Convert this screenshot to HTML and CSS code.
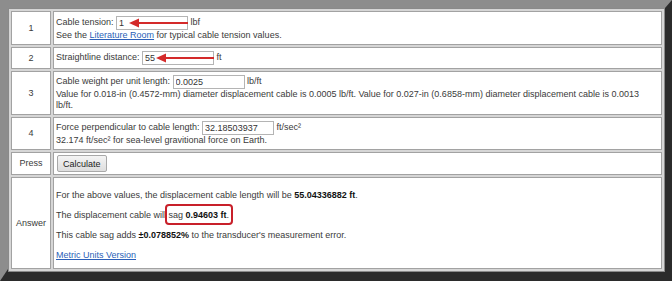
FILE: index.html
```html
<!DOCTYPE html>
<html lang="en">
<head>
  <meta charset="UTF-8">
  <title>Cable Sag Calculator</title>
  <link rel="stylesheet" href="styles.css">
</head>
<body>
  <div class="frame">
    <table class="calc">
      <tr>
        <td class="num">1</td>
        <td class="body">
          Cable tension: <span class="field"><input type="text" value="1"><svg class="arrow arrow-1" width="59" height="10" viewBox="0 0 59 10"><polygon points="0,5 10,0.5 10,9.5" fill="#d42a2a"/><line x1="9" y1="5" x2="59" y2="5" stroke="#d42a2a" stroke-width="2"/></svg></span> lbf<br>
          See the <a href="#">Literature Room</a> for typical cable tension values.
        </td>
      </tr>
      <tr>
        <td class="num">2</td>
        <td class="body">
          Straightline distance: <span class="field"><input type="text" value="55"><svg class="arrow arrow-2" width="58" height="10" viewBox="0 0 58 10"><polygon points="0,5 10,0.5 10,9.5" fill="#d42a2a"/><line x1="9" y1="5" x2="58" y2="5" stroke="#d42a2a" stroke-width="2"/></svg></span> ft
        </td>
      </tr>
      <tr>
        <td class="num">3</td>
        <td class="body">
          Cable weight per unit length: <span class="field"><input type="text" value="0.0025"></span> lb/ft<br>
          Value for 0.018-in (0.4572-mm) diameter displacement cable is 0.0005 lb/ft. Value for 0.027-in (0.6858-mm) diameter displacement cable is 0.0013 lb/ft.
        </td>
      </tr>
      <tr>
        <td class="num">4</td>
        <td class="body">
          Force perpendicular to cable length: <span class="field"><input type="text" value="32.18503937"></span> ft/sec²<br>
          32.174 ft/sec² for sea-level gravitional force on Earth.
        </td>
      </tr>
      <tr>
        <td class="num">Press</td>
        <td class="body"><button type="button">Calculate</button></td>
      </tr>
      <tr>
        <td class="num">Answer</td>
        <td class="body answer">
          <p>For the above values, the displacement cable length will be <b>55.04336882 ft</b>.</p>
          <p>The displacement cable will <span class="marked">sag <b>0.94603 ft</b>.</span></p>
          <p>This cable sag adds <b>±0.078852%</b> to the transducer's measurement error.</p>
          <p class="metric"><a href="#">Metric Units Version</a></p>
        </td>
      </tr>
    </table>
  </div>
</body>
</html>
```

FILE: styles.css
```css
html, body {
  margin: 0;
  padding: 0;
}
body {
  font-family: "Liberation Sans", Arial, sans-serif;
  font-size: 9px;
  color: #3a3a3a;
  background: #fff;
}
.frame {
  width: 657px;
  height: 261px;
  border-style: solid;
  border-width: 8px 7px 12px 8px;
  border-color: #8d8d8d #2b2b2b #2b2b2b #8d8d8d;
}
.calc {
  width: 657px;
  height: 261px;
  border: 1px solid #8a8a8a;
  border-spacing: 2px;
  background: #d6d6d6;
}
.calc td {
  background: #fff;
  border: 1px solid #a2a2a2;
  line-height: 11px;
}
.num {
  width: 34px;
  padding: 0 2px;
  text-align: center;
  vertical-align: middle;
}
.body {
  padding: 3px 20px 3px 2px;
  vertical-align: middle;
}
.calc tr:nth-child(1) td { height: 26px; }
.calc tr:nth-child(2) td { height: 14px; }
.calc tr:nth-child(3) td { height: 35px; }
.calc tr:nth-child(4) td { height: 25px; }
.calc tr:nth-child(5) td { height: 15px; padding-top: 2px; padding-bottom: 2px; }
a {
  color: #2b5fb8;
}
b {
  color: #111;
}
.field {
  display: inline-block;
  position: relative;
  vertical-align: middle;
}
input {
  display: block;
  box-sizing: border-box;
  width: 72px;
  height: 14px;
  margin: 0;
  padding: 0 2px;
  border: 1px solid #b4b4b4;
  font-family: inherit;
  font-size: 9px;
  color: #333;
}
.arrow {
  position: absolute;
  top: 2px;
  right: 0;
}
button {
  height: 17px;
  margin: 0 0 0 1px;
  padding: 0 5px;
  font-family: inherit;
  font-size: 9px;
  color: #222;
  background: linear-gradient(#f4f4f4, #dedede);
  border: 1px solid #a8a8a8;
  border-radius: 2px;
}
.answer p {
  margin: 9px 0;
}
.answer p.metric {
  margin: 7px 0 4px;
}
.marked {
  position: relative;
}
.marked::after {
  content: "";
  position: absolute;
  left: -4px;
  right: -4px;
  top: -6px;
  bottom: -5px;
  border: 2px solid #c8202a;
  border-radius: 4px;
}
```
